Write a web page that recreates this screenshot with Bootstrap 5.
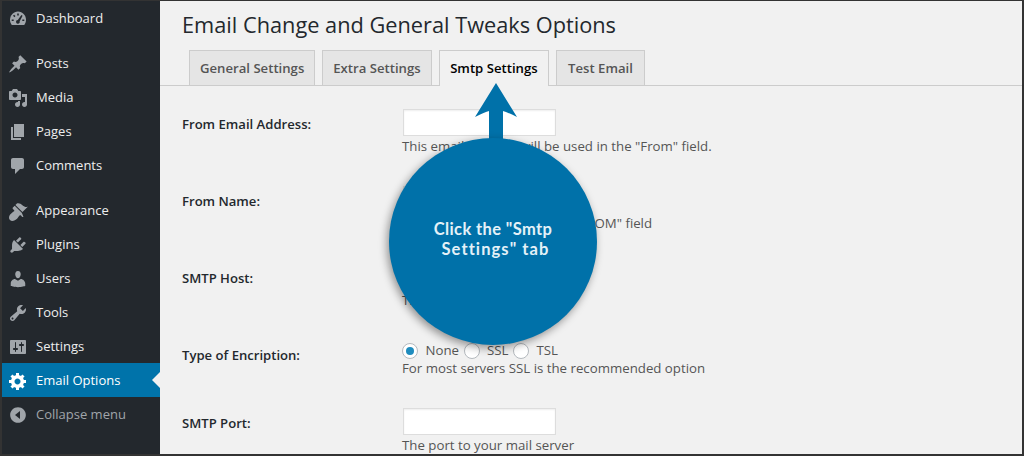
<!DOCTYPE html>
<html lang="en">
<head>
    <meta charset="UTF-8">
    <meta name="viewport" content="width=device-width, initial-scale=1.0">
    <title>Email Options</title>
    <link href="https://cdn.jsdelivr.net/npm/bootstrap@5.3.3/dist/css/bootstrap.min.css" rel="stylesheet">
    <style>
        html, body { height: 100%; overflow: hidden; }
        body { font-family: "Open Sans", sans-serif; font-size: 13px; color: #444; background: #f1f1f1; }

        /* Frame round the screenshot */
        .shot { height: 456px; border: 2px solid #333; border-top-width: 1px; overflow: hidden; position: relative; }

        /* Sidebar */
        .side { width: 158px; flex: none; background: #23282d; }
        .side-item { height: 34px; padding-top: 1px; display: flex; align-items: center; color: #eee; font-size: 13px; text-decoration: none; position: relative; }
        .side-icon { width: 34px; flex: none; padding-left: 6px; display: flex; }
        .side-icon svg { width: 20px; height: 20px; fill: #a0a5aa; }
        .side-gap { margin-top: 11px; }
        .side-item.now { background: #0073aa; color: #fff; }
        .side-item.now svg { fill: #fff; }
        .side-item.now::after { content: ""; position: absolute; right: 0; top: 9px; border: 8px solid transparent; border-right-color: #f1f1f1; border-left: 0; }
        .side-item.fold { color: #a0a5aa; }

        /* Main */
        .page-main { padding-left: 22px; min-width: 0; }
        .page-title { font-size: 21.75px; font-weight: 400; color: #23282d; line-height: 29px; margin: 9px 0 0; }
        .tab-row { margin: 11px 0 0 -22px; padding-left: 29px; gap: 7px; border-bottom: 1px solid #ccc; height: 36px; }
        .tab-link { height: 35px; padding: 0 10px; background: #e5e5e5; border: 1px solid #ccc; border-bottom: 0; color: #555; font-weight: 600; font-size: 13.15px; line-height: 34px; text-decoration: none; white-space: nowrap; }
        .tab-link.on { background: #f1f1f1; color: #000; height: 36px; padding: 0 10.500px; }
        .tab-link:last-child { padding: 0 11px; }

        .opt-list { margin-top: 23px; }
        .opt-row { display: flex; height: 77px; }
        .opt-row.short { height: 68px; }
        .opt-label { width: 221px; flex: none; font-size: 13.1px; font-weight: 600; color: #23282d; padding-top: 6px; }
        .opt-input { display: block; width: 153px; height: 27px; background: #fff; border: 1px solid #ddd; box-shadow: inset 0 1px 2px rgba(0,0,0,.07); }
        .opt-note { margin: 1px 0 0 -1px; font-size: 13.25px; line-height: 18px; color: #555; white-space: nowrap; }
        .opt-radios { height: 20px; margin: 1px 0 -3px -1px; display: flex; align-items: center; color: #555; font-size: 13.25px; }
        .opt-radios span:not(.opt-radio) { margin-right: 4.500px; }
        .opt-radio { width: 16px; height: 16px; border-radius: 50%; background: #fff; border: 1px solid #b4b9be; margin-right: 7.500px; display: flex; align-items: center; justify-content: center; flex: none; }
        .opt-radio.on::before { content: ""; width: 8px; height: 8px; border-radius: 50%; background: #1e8cbe; }

        /* Callout */
        .callout { position: absolute; left: 387px; top: 137px; width: 208px; height: 207px; border-radius: 50%; background: #0071a9; box-shadow: -2px 3px 8px rgba(0,0,0,.4); color: #e4f1f8; font-family: Lato, sans-serif; font-weight: 700; font-size: 16.5px; line-height: 20px; letter-spacing: .37px; text-align: center; padding-top: 81px; }
        .callout-wide { display: inline-block; margin-left: 5px; letter-spacing: 1.080px; }
        .callout-arrow { position: absolute; left: 473px; top: 82px; width: 42px; height: 60px; fill: #0071a9; }
    </style>
</head>
<body>
<div class="shot d-flex">
    <nav class="side">
        <a class="side-item" href="#"><span class="side-icon"><svg viewBox="0 0 20 20"><path d="M3.760 16h12.480c1.100-1.430 1.760-3.210 1.760-5.150 0-4.610-3.590-8.350-8-8.350s-8 3.740-8 8.350c0 1.940.66 3.720 1.760 5.150z"/><path fill="#23282d" d="M9.200 4.500h1.600v2H9.200zM5 6.800l1.100-1.100 1.400 1.400-1.100 1.100zM3.700 10.500h2v1.600h-2zM14.300 10.500h2v1.600h-2zM13.400 6l1.200.8-2.900 5.400a1.900 1.900 0 1 1-1.900-1.300z"/></svg></span>Dashboard</a>
        <a class="side-item side-gap" href="#"><span class="side-icon"><svg viewBox="0 0 20 20"><path d="M10.440 3.020l1.820-1.820 6.360 6.350-1.830 1.820c-1.050-.68-2.480-.57-3.410.36l-.75.75c-.92.93-1.040 2.350-.35 3.410l-1.830 1.820-2.410-2.410-2.800 2.790c-.42.42-3.380 2.710-3.800 2.290s1.860-3.390 2.280-3.810l2.790-2.790L4.100 9.360l1.830-1.820c1.050.69 2.480.57 3.400-.36l.75-.75c.93-.92 1.050-2.350.36-3.410z"/></svg></span>Posts</a>
        <a class="side-item" href="#"><span class="side-icon"><svg viewBox="0 0 20 20"><path d="M13 11V4c0-.55-.45-1-1-1h-1.670L9 1H5L3.670 3H2c-.55 0-1 .45-1 1v7c0 .55.45 1 1 1h10c.55 0 1-.45 1-1zM7 4.500c1.380 0 2.500 1.120 2.500 2.500S8.380 9.500 7 9.500 4.500 8.380 4.500 7 5.620 4.500 7 4.500zM14 6h5v10.500c0 1.380-1.120 2.500-2.500 2.500S14 17.880 14 16.500s1.120-2.500 2.500-2.500c.17 0 .34.02.5.05V9h-3V6zm-4 8.050V13h2v3.500c0 1.380-1.120 2.500-2.500 2.500S7 17.880 7 16.500 8.120 14 9.500 14c.17 0 .34.02.5.05z"/></svg></span>Media</a>
        <a class="side-item" href="#"><span class="side-icon"><svg viewBox="0 0 20 20"><path d="M6 15V2h10v13H6zm-1 1h8v2H3V5h2v11z"/></svg></span>Pages</a>
        <a class="side-item" href="#"><span class="side-icon"><svg viewBox="0 0 20 20"><path d="M5 2h9c1.100 0 2 .9 2 2v7c0 1.100-.9 2-2 2h-2l-5 5v-5H5c-1.100 0-2-.9-2-2V4c0-1.100.9-2 2-2z"/></svg></span>Comments</a>
        <a class="side-item side-gap" href="#"><span class="side-icon"><svg viewBox="0 0 20 20"><path d="M14.480 11.060L7.410 3.990l1.500-1.500c.5-.56 2.300-.47 3.510.32 1.210.8 1.430 1.280 2.910 2.100 1.180.64 2.450 1.260 4.450.85zm-.71.71L6.700 4.700 4.930 6.470c-.39.39-.39 1.020 0 1.410l1.060 1.060c.39.39.39 1.030 0 1.420-.6.600-1.430 1.110-2.210 1.690-.35.26-.7.530-1.010.84C1.430 13.730 0 17.260 2 18.990c1.730 2 5.260.57 7.010-1.180.31-.31.58-.66.840-1.010.58-.78 1.090-1.610 1.690-2.210.39-.39 1.030-.39 1.420 0l1.060 1.060c.39.39 1.020.39 1.410 0z"/></svg></span>Appearance</a>
        <a class="side-item" href="#"><span class="side-icon"><svg viewBox="0 0 20 20"><path d="M13.110 4.360L9.870 7.600 8 5.730l3.240-3.240c.35-.34 1.050-.2 1.560.32.52.51.66 1.210.31 1.550zm-8 1.770l.91-1.120 9.010 9.010-1.190.84c-.71.71-2.630 1.160-3.820 1.160H6.140L4.900 17.260c-.59.59-1.540.59-2.120 0-.59-.58-.59-1.530 0-2.120l1.240-1.240v-3.880c0-1.130.4-3.050 1.090-3.890zm7.260 3.970l3.240-3.240c.34-.35 1.040-.21 1.550.31.52.51.66 1.210.31 1.550l-3.240 3.250z"/></svg></span>Plugins</a>
        <a class="side-item" href="#"><span class="side-icon"><svg viewBox="0 0 20 20"><path d="M10 9.250c-2.270 0-2.730-3.440-2.730-3.440C7 4.020 7.820 2 9.970 2c2.160 0 2.980 2.020 2.710 3.810 0 0-.41 3.440-2.680 3.440zm0 2.570L12.720 10c2.390 0 4.520 2.330 4.520 4.530v2.490s-3.650 1.130-7.240 1.130c-3.650 0-7.240-1.130-7.240-1.130v-2.490c0-2.250 1.940-4.480 4.150-4.480z"/></svg></span>Users</a>
        <a class="side-item" href="#"><span class="side-icon"><svg viewBox="0 0 20 20"><path d="M16.680 9.770c-1.340 1.340-3.300 1.670-4.950.99l-5.410 6.520c-.99.99-2.590.99-3.580 0s-.99-2.590 0-3.570l6.520-5.420c-.68-1.650-.35-3.610.99-4.950 1.280-1.280 3.120-1.620 4.720-1.060l-2.890 2.890 2.820 2.820 2.860-2.870c.53 1.580.18 3.400-1.080 4.650zM3.810 16.210c.4.390 1.040.39 1.430 0 .4-.4.400-1.040 0-1.430-.39-.4-1.030-.4-1.430 0-.39.390-.39 1.030 0 1.430z"/></svg></span>Tools</a>
        <a class="side-item" href="#"><span class="side-icon"><svg viewBox="0 0 20 20"><path d="M18 16V4c0-.55-.45-1-1-1H3c-.55 0-1 .45-1 1v12c0 .55.45 1 1 1h14c.55 0 1-.45 1-1zM8 11h1c.55 0 1 .45 1 1s-.45 1-1 1H8v1.500c0 .28-.22.5-.5.5s-.5-.22-.5-.5V13H6c-.55 0-1-.45-1-1s.45-1 1-1h1V5.500c0-.28.22-.5.5-.5s.5.22.5.5V11zm5-2h-1c-.55 0-1-.45-1-1s.45-1 1-1h1V5.500c0-.28.22-.5.5-.5s.5.22.5.5V7h1c.55 0 1 .45 1 1s-.45 1-1 1h-1v5.500c0 .28-.22.5-.5.5s-.5-.22-.5-.5V9z"/></svg></span>Settings</a>
        <a class="side-item now" href="#"><span class="side-icon"><svg viewBox="0 0 20 20"><path d="M18 12h-2.180c-.17.7-.44 1.350-.81 1.930l1.540 1.540-2.100 2.100-1.540-1.540c-.58.36-1.230.63-1.910.79V19H8v-2.180c-.68-.16-1.330-.43-1.910-.79l-1.540 1.540-2.120-2.120 1.540-1.540c-.36-.58-.63-1.230-.79-1.910H1V9.030h2.170c.16-.7.440-1.350.8-1.940L2.430 5.550l2.100-2.100 1.540 1.540c.58-.37 1.240-.64 1.930-.81V2h3v2.180c.68.16 1.330.43 1.910.79l1.540-1.540 2.120 2.120-1.540 1.540c.36.59.64 1.240.8 1.940H18V12zm-8.500 1.500c1.660 0 3-1.340 3-3s-1.340-3-3-3-3 1.340-3 3 1.340 3 3 3z"/></svg></span>Email Options</a>
        <a class="side-item fold" href="#"><span class="side-icon"><svg viewBox="0 0 20 20"><path d="M10 2.160c4.330 0 7.840 3.510 7.840 7.840s-3.510 7.840-7.840 7.840S2.160 14.330 2.160 10 5.670 2.160 10 2.160zM12 14V6l-5 4z"/></svg></span>Collapse menu</a>
    </nav>
    <main class="page-main flex-grow-1">
        <h1 class="page-title">Email Change and General Tweaks Options</h1>
        <div class="tab-row d-flex">
            <a class="tab-link" href="#">General Settings</a>
            <a class="tab-link" href="#">Extra Settings</a>
            <a class="tab-link on" href="#">Smtp Settings</a>
            <a class="tab-link" href="#">Test Email</a>
        </div>
        <div class="opt-list">
            <div class="opt-row"><div class="opt-label">From Email Address:</div><div><span class="opt-input"></span><div class="opt-note">This email address will be used in the "From" field.</div></div></div>
            <div class="opt-row"><div class="opt-label">From Name:</div><div><span class="opt-input"></span><div class="opt-note">The name to be used in the "FROM" field</div></div></div>
            <div class="opt-row"><div class="opt-label">SMTP Host:</div><div><span class="opt-input"></span><div class="opt-note">The mail server</div></div></div>
            <div class="opt-row short"><div class="opt-label">Type of Encription:</div><div><div class="opt-radios"><span class="opt-radio on"></span><span>None</span><span class="opt-radio"></span><span>SSL</span><span class="opt-radio"></span><span>TSL</span></div><div class="opt-note">For most servers SSL is the recommended option</div></div></div>
            <div class="opt-row"><div class="opt-label">SMTP Port:</div><div><span class="opt-input"></span><div class="opt-note">The port to your mail server</div></div></div>
        </div>
    </main>
    <svg class="callout-arrow" viewBox="0 0 42 60"><path d="M21 0L42 34Q32 29 28 28V60H14V28Q10 29 0 34z"/></svg>
    <div class="callout">Click the "Smtp<br><span class="callout-wide">Settings" tab</span></div>
</div>
<script src="https://cdn.jsdelivr.net/npm/bootstrap@5.3.3/dist/js/bootstrap.bundle.min.js"></script>
</body>
</html>
